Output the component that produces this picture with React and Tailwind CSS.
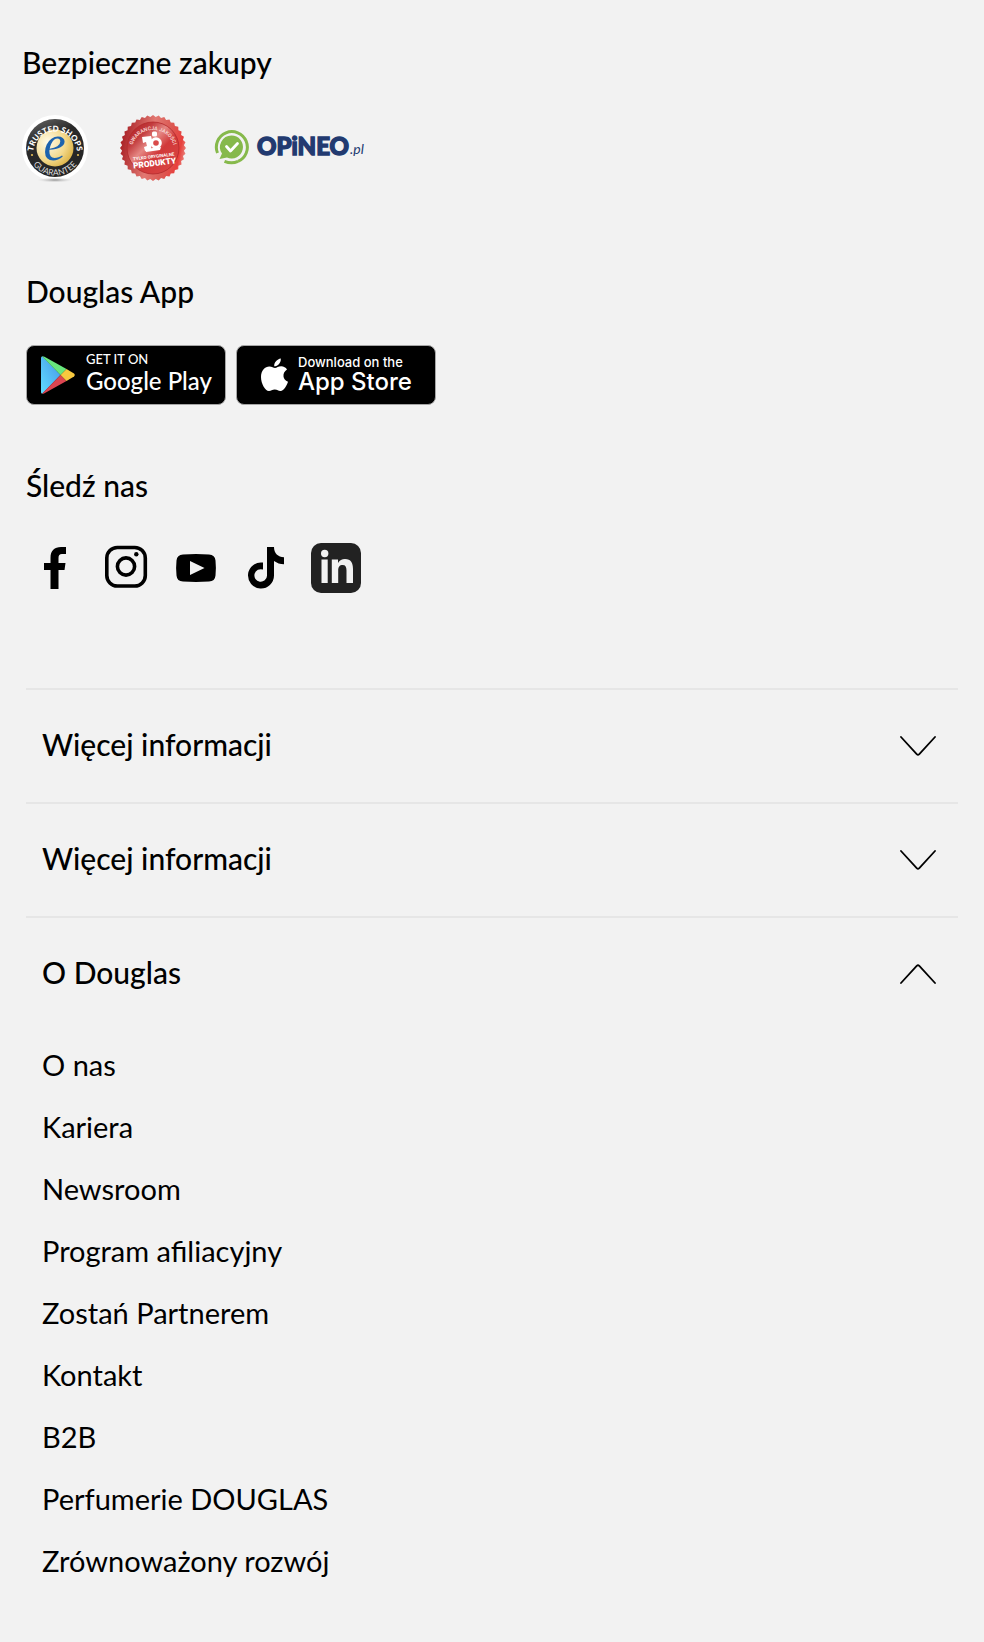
import { useState } from "react";

const aboutLinks = [
  "O nas",
  "Kariera",
  "Newsroom",
  "Program afiliacyjny",
  "Zostań Partnerem",
  "Kontakt",
  "B2B",
  "Perfumerie DOUGLAS",
  "Zrównoważony rozwój",
];

const sealPoints = Array.from({ length: 72 }, (_, i) => {
  const r = i % 2 ? 31 : 33;
  const a = (i * Math.PI) / 36;
  return `${(33 + r * Math.cos(a)).toFixed(2)},${(33 + r * Math.sin(a)).toFixed(2)}`;
}).join(" ");

function TrustedShops() {
  return (
    <svg viewBox="0 0 66 68" className="h-[68px] w-[66px]" fontFamily="Lato, sans-serif">
      <defs>
        <radialGradient id="gold" cx="0.3" cy="0.35" r="0.8">
          <stop offset="0" stopColor="#fffbe9" />
          <stop offset="0.6" stopColor="#f3d98c" />
          <stop offset="1" stopColor="#d9ae3c" />
        </radialGradient>
        <linearGradient id="ring" x1="0" y1="0" x2="0.4" y2="1">
          <stop offset="0" stopColor="#6a6a6a" />
          <stop offset="0.4" stopColor="#2a2a2a" />
          <stop offset="1" stopColor="#262626" />
        </linearGradient>
        <radialGradient id="shade">
          <stop offset="0" stopColor="#8d8d8d" />
          <stop offset="1" stopColor="#d8d8d8" stopOpacity="0" />
        </radialGradient>
        <path id="tsTop" d="M11 38.500 A22 22 0 1 1 55 38.500" />
        <path id="tsBottom" d="M5.500 33 A27.500 27.500 0 0 0 60.500 33" />
      </defs>
      <circle cx="33" cy="33" r="33" fill="#fff" />
      <ellipse cx="33" cy="65" rx="18" ry="2.500" fill="url(#shade)" />
      <circle cx="33" cy="33" r="29" fill="url(#ring)" />
      <circle cx="33" cy="33" r="18.500" fill="url(#gold)" />
      <text fontSize="8" fontWeight="900" fill="#fff" textAnchor="middle">
        <textPath href="#tsTop" startOffset="50%">TRUSTED SHOPS</textPath>
      </text>
      <text fontSize="8.500" fill="#ddd" textAnchor="middle">
        <textPath href="#tsBottom" startOffset="50%">GUARANTEE</textPath>
      </text>
      <circle cx="10" cy="40" r="1.100" fill="#e5bd55" />
      <circle cx="56" cy="40" r="1.100" fill="#e5bd55" />
      <text x="32.500" y="44.500" fontSize="50" fontStyle="italic" fontFamily="Liberation Serif, serif" fill="#1d63ae" textAnchor="middle">e</text>
    </svg>
  );
}

function QualitySeal() {
  return (
    <svg viewBox="0 0 66 66" className="h-[66px] w-[66px]" fontFamily="Roboto, sans-serif">
      <defs>
        <linearGradient id="sealEdge" x1="0" y1="0.4" x2="1" y2="0.6">
          <stop offset="0" stopColor="#a81f24" />
          <stop offset="0.45" stopColor="#e27872" />
          <stop offset="0.7" stopColor="#db5a54" />
          <stop offset="0.9" stopColor="#e8403d" />
          <stop offset="1" stopColor="#e88b84" />
        </linearGradient>
        <linearGradient id="sealFace" x1="0.1" y1="0.1" x2="0.9" y2="0.9">
          <stop offset="0" stopColor="#b5262a" />
          <stop offset="0.2" stopColor="#c23c3e" />
          <stop offset="0.4" stopColor="#e58783" />
          <stop offset="0.62" stopColor="#d1393a" />
          <stop offset="1" stopColor="#d94543" />
        </linearGradient>
        <path id="sealTop" d="M12.500 30 A21.500 21.500 0 0 1 53.500 30" />
      </defs>
      <polygon points={sealPoints} fill="url(#sealEdge)" />
      <circle cx="33" cy="33" r="26" fill="url(#sealFace)" stroke="#b3282b" strokeWidth="0.800" />
      <text fontSize="5.200" fontWeight="700" fill="#f6cfcc" textAnchor="middle">
        <textPath href="#sealTop" startOffset="50%">GWARANCJA JAKOŚCI</textPath>
      </text>
      <g fill="#fff">
        <path d="M22 22 L31 21 L32 25 L31 34 L25 36 L24 32 L27 31 L26 27 L23 28 Z" />
        <rect x="32" y="16.500" width="5" height="5" rx="1.500" />
        <circle cx="36" cy="28" r="5.800" />
        <path d="M25 34 L41 32 L40 35 L26 37 Z" />
      </g>
      <circle cx="36" cy="28" r="2.800" fill="#d94b4a" />
      <g fill="#fff" textAnchor="middle" transform="rotate(-7 34 44)">
        <text x="34" y="43" fontSize="4.400" fontWeight="700">TYLKO ORYGINALNE</text>
        <text x="34" y="51" fontSize="8.300" fontWeight="900">PRODUKTY</text>
      </g>
    </svg>
  );
}

function Opineo() {
  return (
    <svg viewBox="0 0 152 36" className="h-9 w-[152px]" fontFamily="Lato, sans-serif">
      <g fill="none" stroke="#86b94b" strokeWidth="3">
        <path d="M3.500 24 A15.500 15.500 0 1 1 24 32.400" />
        <path d="M10.500 32.400 C15 34.200 20 34.200 24 32.400" />
      </g>
      <path d="M17.500 6.500 A11.500 11.500 0 1 1 13 28.600 L5.500 30 L8 24.500 A11.500 11.500 0 0 1 17.500 6.500 Z" fill="#86b94b" />
      <path d="M12.500 17.500 L16.500 22 L23.500 14.500" fill="none" stroke="#fff" strokeWidth="2.800" strokeLinecap="round" strokeLinejoin="round" />
      <text x="43" y="26" fontSize="24" fontWeight="900" fill="#223a70" stroke="#223a70" strokeWidth="1.400">OPiNEO</text>
      <text x="136" y="25" fontSize="14" fontStyle="italic" fill="#223a70">.pl</text>
    </svg>
  );
}

function PlayIcon() {
  return (
    <svg viewBox="0 0 34 38" className="h-[38px] w-[34px] shrink-0">
      <defs>
        <linearGradient id="playBlue" x1="0" y1="1" x2="0.8" y2="0.2">
          <stop offset="0" stopColor="#5fdcff" />
          <stop offset="1" stopColor="#4ba3ec" />
        </linearGradient>
      </defs>
      <path d="M0 2 Q0 0 1.500 0.500 L19.500 19 L1.500 37.500 Q0 38 0 36 Z" fill="url(#playBlue)" />
      <path d="M1 0.300 Q2 0 3.500 0.800 L25.500 13 L19.500 19 Z" fill="#68e77d" />
      <path d="M1 37.700 Q2 38 3.500 37.200 L25.500 25 L19.500 19 Z" fill="#dc4551" />
      <path d="M25.500 13 L33 17.500 Q34.500 19 33 20.500 L25.500 25 L19.500 19 Z" fill="#f8c83f" />
    </svg>
  );
}

function AppleIcon() {
  return (
    <svg viewBox="0 0 27 34" className="h-[34px] w-[27px] shrink-0" fill="#fff">
      <path d="M19.800 0.500 C20.200 4.700 16.800 8.300 13.200 8.300 C12.800 4.600 16.200 1 19.800 0.500 Z" />
      <path d="M14 10 C15.600 10 17.300 8.300 20.200 8.300 C22.700 8.400 24.800 9.600 26 11.400 C20.800 14.800 21.600 21.600 27 23.700 C25.800 27.300 22.900 32.800 19.600 32.900 C17.200 33 16.600 31.500 13.800 31.500 C11 31.500 10.200 32.900 8 33 C4.200 33.100 0 25.600 0 19 C0 12.300 4.200 8.600 8.300 8.500 C10.900 8.500 12.600 10 14 10 Z" />
    </svg>
  );
}

const social = [
  {
    name: "Facebook",
    art: <path d="M19.500 46 V27 H13 V20 H19.500 V15 C19.500 7.500 23.500 4 30 4 H35 V11 H31 C28.500 11 27.500 12.300 27.500 15 V20 H34.500 L33.500 27 H27.500 V46 Z" />,
  },
  {
    name: "Instagram",
    art: (
      <>
        <rect x="5.800" y="4.500" width="38.500" height="38.500" rx="10.500" fill="none" stroke="#000" strokeWidth="3.600" />
        <circle cx="25" cy="23.500" r="8.600" fill="none" stroke="#000" strokeWidth="3.600" />
        <circle cx="35.300" cy="11.300" r="2.200" />
      </>
    ),
  },
  {
    name: "YouTube",
    art: <path fillRule="evenodd" d="M12 11.400 Q25 10.600 38 11.400 Q44 11.700 44.500 17.500 Q45.300 25 44.500 32.500 Q44 38.300 38 38.600 Q25 39.400 12 38.600 Q6 38.300 5.500 32.500 Q4.700 25 5.500 17.500 Q6 11.700 12 11.400 Z M19 18 V32 L33.500 25 Z" />,
  },
  {
    name: "TikTok",
    art: <path d="M26 4 H33 C33 10 37 14.300 43 14.300 V21.300 C39 21.300 36 20 33 18 V32.500 A13 13 0 1 1 22 19.600 V26.600 A6.300 6.300 0 1 0 26 32.700 Z" />,
  },
  {
    name: "LinkedIn",
    art: (
      <>
        <rect width="50" height="50" rx="10" fill="#222" />
        <circle cx="13.700" cy="10.500" r="3.700" fill="#f2f2f2" />
        <path d="M10.500 16.500 H16.700 V40 H10.500 Z M20.800 16.500 H27 V20 C28.500 17.500 31 16 34 16 C40 16 42 20 42 26 V40 H35.500 V27.500 C35.500 24 34.500 22 31.700 22 C28.500 22 27.200 24 27.200 27.500 V40 H20.800 Z" fill="#f2f2f2" />
      </>
    ),
  },
];

function Chevron({ open }) {
  return (
    <svg viewBox="0 0 36 20" className="h-5 w-9 shrink-0" fill="none" stroke="#000" strokeWidth="1.800" strokeLinecap="round" strokeLinejoin="round">
      <path d={open ? "M1 19 L16.700 1.800 Q18 0.600 19.300 1.800 L35 19" : "M1 1 L16.700 18.200 Q18 19.400 19.300 18.200 L35 1"} />
    </svg>
  );
}

function Panel({ title, links, defaultOpen }) {
  const [open, setOpen] = useState(Boolean(defaultOpen));
  return (
    <section className="border-t-2 border-[#e6e6e6]">
      <h2>
        <button type="button" aria-expanded={open} onClick={() => setOpen(!open)} className="flex h-28 w-full items-center justify-between pl-4 pr-[22px] text-left text-[30px] font-medium leading-10">
          <span className="pb-1">{title}</span>
          <Chevron open={open} />
        </button>
      </h2>
      {open && links && (
        <ul className="flex flex-col gap-[22px] px-4 pt-[15px]">
          {links.map((label) => (
            <li key={label} className="text-[29px] leading-10">
              <a href="#">{label}</a>
            </li>
          ))}
        </ul>
      )}
    </section>
  );
}

export default function App() {
  return (
    <footer className="min-h-screen bg-[#f2f2f2] pb-[60px] pt-[42px] font-['Lato',sans-serif] text-black">
      <section className="px-[22px]">
        <h2 className="text-[30px] font-medium leading-10">Bezpieczne zakupy</h2>
        <div className="mt-[33px] flex h-[68px] items-start">
          <a href="#" aria-label="Trusted Shops"><TrustedShops /></a>
          <a href="#" aria-label="Gwarancja jakości" className="ml-8"><QualitySeal /></a>
          <a href="#" aria-label="Opineo" className="ml-7 mt-3.5"><Opineo /></a>
        </div>
      </section>

      <div className="px-[26px]">
        <section className="mt-22">
          <h2 className="text-[30px] font-medium leading-10">Douglas App</h2>
          <div className="mt-[34px] flex gap-2.5">
            <a href="#" className="flex h-[60px] w-[200px] items-center gap-[11px] rounded-lg border border-[#a6a6a6] bg-black pl-3.5 text-white">
              <PlayIcon />
              <span className="flex flex-col whitespace-nowrap pb-1">
                <span className="text-[13px] font-medium leading-4">GET IT ON</span>
                <span className="text-[24px] font-medium leading-7">Google Play</span>
              </span>
            </a>
            <a href="#" className="flex h-[60px] w-[200px] items-center gap-2.5 rounded-lg border border-[#a6a6a6] bg-black pl-6 font-['Inter',sans-serif] text-white">
              <AppleIcon />
              <span className="flex flex-col whitespace-nowrap pb-0.5">
                <span className="text-[13px] font-medium leading-4">Download on the</span>
                <span className="text-[24px] font-medium leading-6">App Store</span>
              </span>
            </a>
          </div>
        </section>

        <section className="mt-15">
          <h2 className="text-[30px] font-medium leading-10">Śledź nas</h2>
          <div className="mt-[38px] flex gap-5 pl-[5px]">
            {social.map((item) => (
              <a key={item.name} href="#" aria-label={item.name}>
                <svg viewBox="0 0 50 50" className="h-[50px] w-[50px]">{item.art}</svg>
              </a>
            ))}
          </div>
        </section>

        <div className="mt-[95px]">
          <Panel title="Więcej informacji" />
          <Panel title="Więcej informacji" />
          <Panel title="O Douglas" links={aboutLinks} defaultOpen />
        </div>
      </div>
    </footer>
  );
}
